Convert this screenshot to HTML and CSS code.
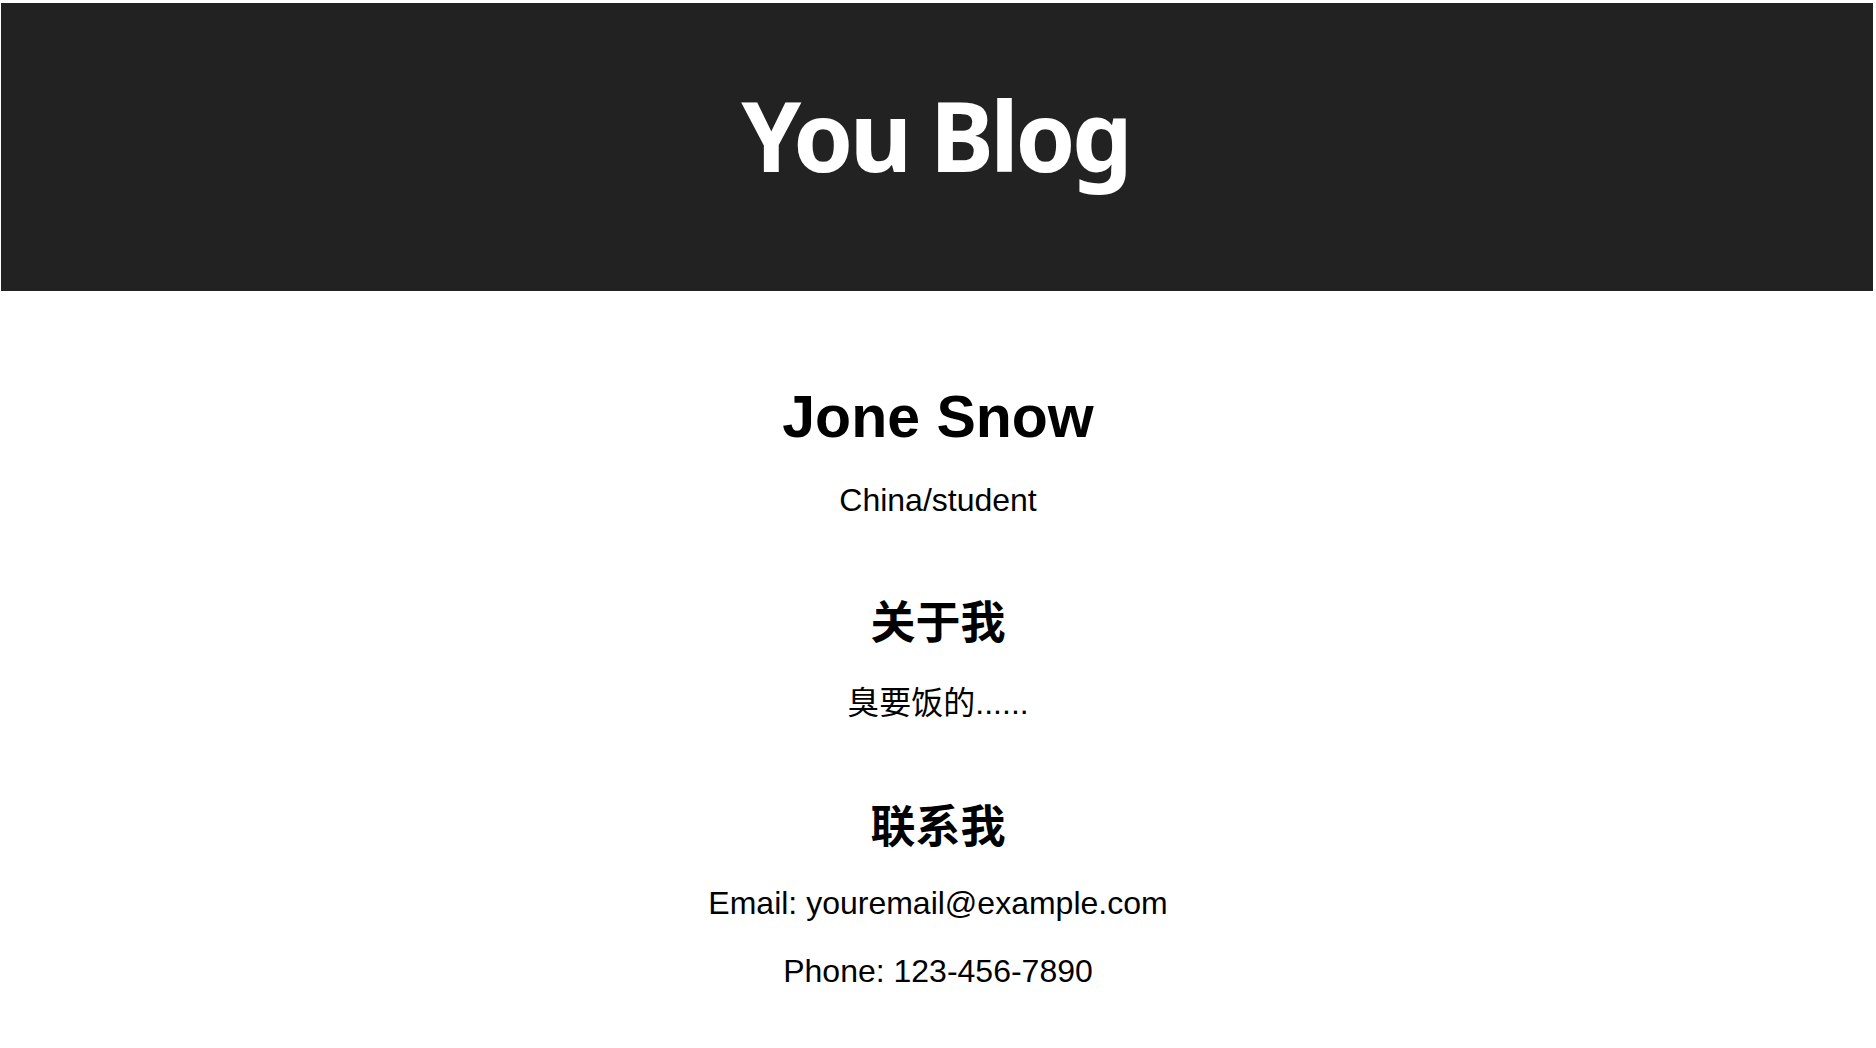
FILE: index.html
```html
<!DOCTYPE html>
<html lang="zh-CN">
<head>
<meta charset="utf-8">
<title>You Blog</title>
<link rel="stylesheet" href="styles.css">
</head>
<body>
<header class="site-header">
  <h1 class="site-title">You Blog</h1>
</header>
<main class="content">
  <h1 class="name">Jone Snow</h1>
  <p class="role">China/student</p>
  <section class="about">
    <h2 class="section-title">关于我</h2>
    <p class="about-text">臭要饭的......</p>
  </section>
  <section class="contact">
    <h2 class="section-title">联系我</h2>
    <p class="contact-line">Email: youremail@example.com</p>
    <p class="contact-line">Phone: 123-456-7890</p>
  </section>
</main>
</body>
</html>
```
FILE: styles.css
```css
html, body {
  margin: 0;
  padding: 0;
  background: #ffffff;
}

body {
  font-family: "Liberation Sans", Arial, "Noto Sans CJK SC", sans-serif;
  color: #000;
}

.site-header {
  margin: 3px 3px 0 1px;
  background: #222222;
  padding: 84px 0 108px;
  text-align: center;
}

.site-title {
  margin: 0;
  font-family: "Noto Sans", "Open Sans", sans-serif;
  font-weight: 700;
  font-size: 96px;
  letter-spacing: -3.5px;
  text-indent: -3.5px;
  line-height: 1;
  color: #ffffff;
}

.content {
  padding-top: 93px;
  text-align: center;
  line-height: 1.15;
}

.name {
  margin: 0 0 30px;
  font-size: 59px;
  font-weight: 700;
}

.role {
  margin: 0 0 79px;
  font-size: 32px;
}

.section-title {
  margin: 0 0 31px;
  font-size: 45px;
  font-weight: 700;
  font-family: "Liberation Sans", "Noto Sans CJK SC", sans-serif;
}

.about-text {
  margin: 36px 0 80px;
  font-size: 32px;
  font-family: "Liberation Sans", "Noto Sans CJK SC", sans-serif;
}

.contact-line {
  margin: 0 0 31px;
  font-size: 32px;
}
```
